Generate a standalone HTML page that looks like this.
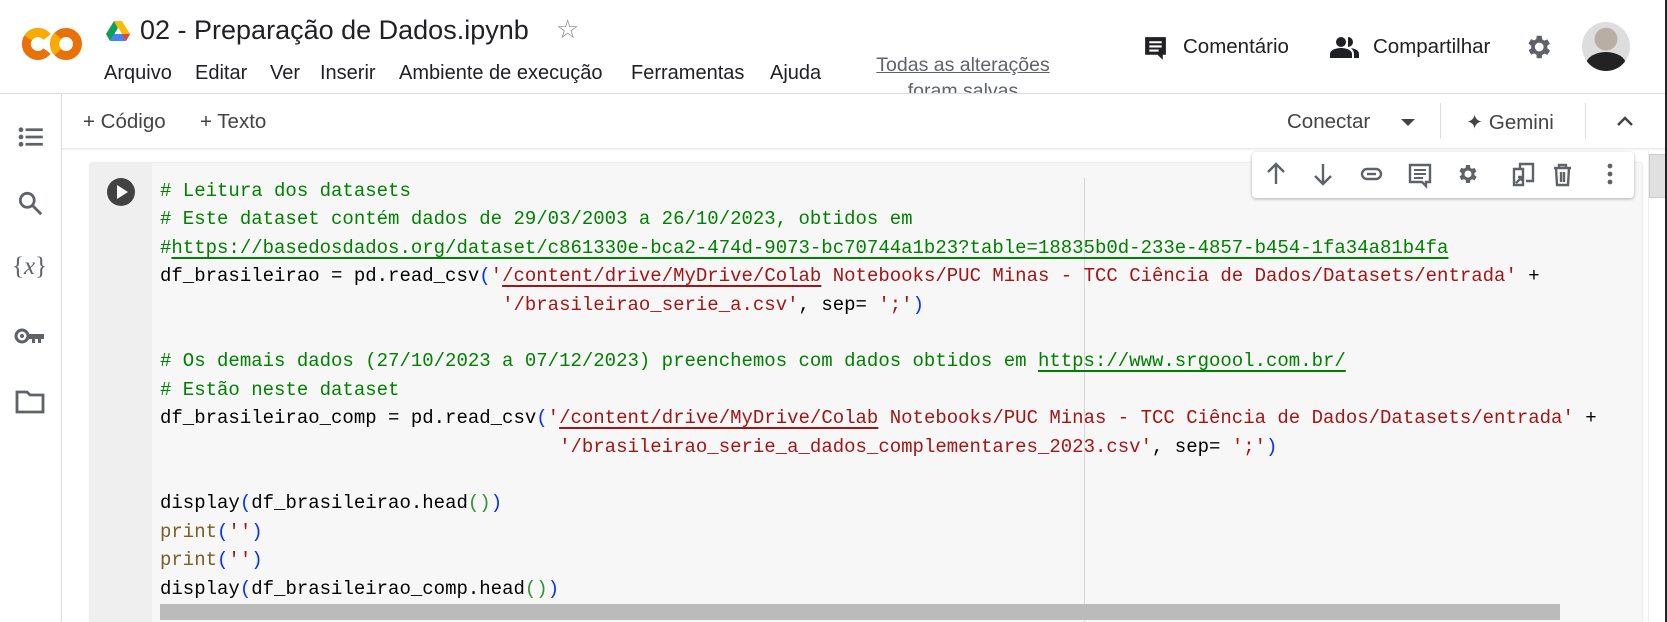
<!DOCTYPE html>
<html><head><meta charset="utf-8"><style>
*{margin:0;padding:0;box-sizing:border-box}
body{width:1667px;height:622px;overflow:hidden;background:#fff;font-family:"Liberation Sans",Arial,sans-serif;position:relative;color:#202124}
.a{position:absolute}
pre{font-family:"Liberation Mono",monospace;font-size:19px;line-height:28.4px;color:#000;white-space:pre}
.c{color:#008000}.s{color:#a31515}.b{color:#0431fa}.g{color:#319331}.p{color:#795e26}
.uc{text-decoration:underline;text-decoration-color:#008000;text-underline-offset:4px;text-decoration-thickness:2px}
.us{text-decoration:underline;text-decoration-color:#a31515;text-underline-offset:4px;text-decoration-thickness:2px}
</style></head><body>
<!-- header -->
<svg class="a" style="left:20px;top:26px" width="62" height="36" viewBox="0 0 62 36">
<path d="M27 11 A11.5 11.5 0 1 0 27 25" fill="none" stroke="#e8710a" stroke-width="9"/>
<path d="M27 11 A11.5 11.5 0 0 0 8 12" fill="none" stroke="#f9ab00" stroke-width="9"/>
<circle cx="46" cy="18" r="11.5" fill="none" stroke="#e8710a" stroke-width="9"/>
<path d="M38 26 A11.5 11.5 0 0 1 38 10" fill="none" stroke="#f9ab00" stroke-width="9"/>
</svg>
<svg class="a" style="left:106px;top:21px" width="24" height="20" viewBox="0 0 24 20">
<path d="M8 0h8l8 13h-8z" fill="#fbbc04"/><path d="M8 0L0 13l4 7 8-13z" fill="#0f9d58"/><path d="M4 20h16l4-7H8z" fill="#4285f4"/><path d="M20 20l4-7h-8z" fill="#ea4335"/>
</svg>
<div class="a" style="left:140px;top:15px;font-size:27px;color:#202124">02 - Preparação de Dados.ipynb</div>
<div class="a" style="left:556px;top:14px;font-size:26px;color:#888">☆</div>
<div class="a" style="left:104px;top:62px;font-size:20px;white-space:nowrap">
<span class="a" style="left:0">Arquivo</span><span class="a" style="left:91px">Editar</span><span class="a" style="left:166px">Ver</span><span class="a" style="left:216px">Inserir</span><span class="a" style="left:295px">Ambiente de execução</span><span class="a" style="left:527px">Ferramentas</span><span class="a" style="left:666px">Ajuda</span></div>
<div class="a" style="left:860px;top:52px;width:206px;height:41px;overflow:hidden;text-align:center;font-size:19.5px;color:#5f6368;line-height:26px"><u>Todas as alterações</u><br>foram salvas</div>
<svg class="a" style="left:1143px;top:35px" width="25" height="27" viewBox="0 0 24 26"><path d="M2 2h20v17h-3v5l-5-5H2z" fill="#202124"/><path d="M6 7h12M6 11h12M6 15h9" stroke="#fff" stroke-width="2"/></svg>
<div class="a" style="left:1183px;top:35px;font-size:20.5px">Comentário</div>
<svg class="a" style="left:1330px;top:36px" width="30" height="22" viewBox="0 0 30 22"><circle cx="11" cy="6" r="5" fill="#202124"/><path d="M0 22v-4c0-4 6-6 11-6s11 2 11 6v4z" fill="#202124"/><path d="M18 1a5 5 0 0 1 0 10" fill="#202124"/><path d="M21 12c4 1 8 2 8 6v4h-5v-4c0-2-1-4-3-6z" fill="#202124"/></svg>
<div class="a" style="left:1373px;top:35px;font-size:20.5px">Compartilhar</div>
<svg class="a" style="left:1523px;top:32px" width="30" height="30" viewBox="0 0 24 24"><path fill="#5f6368" d="M19.4 13a7.5 7.5 0 0 0 0-2l2.1-1.6-2-3.5-2.5 1a7 7 0 0 0-1.7-1L15 3h-4l-.4 2.7a7 7 0 0 0-1.7 1l-2.5-1-2 3.5L6.6 11a7.5 7.5 0 0 0 0 2l-2.1 1.6 2 3.5 2.5-1a7 7 0 0 0 1.7 1L11 21h4l.4-2.7a7 7 0 0 0 1.7-1l2.5 1 2-3.5zM13 15.5A3.5 3.5 0 1 1 13 8.5a3.5 3.5 0 0 1 0 7z"/></svg>
<div class="a" style="left:1582px;top:22px;width:48px;height:49px;border-radius:50%;background:radial-gradient(circle at 50% 35%,#b8aea4 0 28%,#ddd 29% 100%);overflow:hidden"><div style="position:absolute;left:4px;top:30px;width:40px;height:25px;border-radius:50% 50% 0 0;background:#222"></div></div>
<div class="a" style="left:0;top:93px;width:1667px;height:1px;background:#dadce0"></div>
<!-- toolbar -->
<div class="a" style="left:83px;top:110px;font-size:20.5px;color:#444">+ Código</div>
<div class="a" style="left:200px;top:110px;font-size:20.5px;color:#444">+ Texto</div>
<div class="a" style="left:1287px;top:110px;font-size:20.5px;color:#444">Conectar</div>
<div class="a" style="left:1401px;top:119px;width:0;height:0;border-left:7px solid transparent;border-right:7px solid transparent;border-top:7px solid #444"></div>
<div class="a" style="left:1440px;top:103px;width:1px;height:36px;background:#ddd"></div>
<div class="a" style="left:1466px;top:110px;font-size:20.5px;color:#444">✦ Gemini</div>
<div class="a" style="left:1585px;top:103px;width:1px;height:36px;background:#ddd"></div>
<svg class="a" style="left:1615px;top:114px" width="20" height="14" viewBox="0 0 20 14"><path d="M3 11l7-7 7 7" fill="none" stroke="#444" stroke-width="2.5"/></svg>
<div class="a" style="left:61px;top:148px;width:1606px;height:3px;background:linear-gradient(#e8e8e8,#fff)"></div>
<!-- sidebar -->
<div class="a" style="left:61px;top:93px;width:1px;height:529px;background:#dadce0"></div>
<svg class="a" style="left:18px;top:127px" width="26" height="20" viewBox="0 0 28 22"><g fill="#5f6368"><circle cx="3" cy="3" r="2.6"/><circle cx="3" cy="11" r="2.6"/><circle cx="3" cy="19" r="2.6"/><rect x="8" y="1.5" width="19" height="3"/><rect x="8" y="9.5" width="19" height="3"/><rect x="8" y="17.5" width="19" height="3"/></g></svg>
<svg class="a" style="left:18px;top:191px" width="26" height="26" viewBox="0 0 28 28"><circle cx="10" cy="10" r="7.5" fill="none" stroke="#5f6368" stroke-width="3"/><path d="M15.5 15.5L25 25" stroke="#5f6368" stroke-width="3"/></svg>
<div class="a" style="left:12px;top:253px;font-family:'Liberation Serif',serif;font-size:25px;color:#5f6368">{<i>x</i>}</div>
<svg class="a" style="left:14px;top:328px" width="32" height="18" viewBox="0 0 32 18"><circle cx="8" cy="8" r="6" fill="none" stroke="#5f6368" stroke-width="3"/><circle cx="8" cy="8" r="2" fill="#5f6368"/><path d="M14 6h16v5h-3v4h-3v-4h-3v4h-3v-4h-4z" fill="#5f6368"/></svg>
<svg class="a" style="left:15px;top:390px" width="30" height="24" viewBox="0 0 30 24"><path d="M2 2h10l3 3h13v17H2z" fill="none" stroke="#5f6368" stroke-width="2.8"/></svg>
<!-- cell -->
<div class="a" style="left:90px;top:163px;width:1552px;height:459px;background:#f7f7f7;box-shadow:0 0 2px #ccc"></div>
<div class="a" style="left:90px;top:163px;width:62px;height:459px;background:#efefef"></div>
<div class="a" style="left:107px;top:178px;width:28px;height:28px;border-radius:50%;background:#424242"></div>
<div class="a" style="left:117px;top:185px;width:0;height:0;border-top:7px solid transparent;border-bottom:7px solid transparent;border-left:11px solid #fff"></div>
<div class="a" style="left:1084px;top:178px;width:1px;height:444px;background:#d6d6d6"></div>
<pre class="a" style="left:160px;top:177px"><span class="c"># Leitura dos datasets</span>
<span class="c"># Este dataset contém dados de 29/03/2003 a 26/10/2023, obtidos em</span>
<span class="c">#<span class="uc">https://basedosdados.org/dataset/c861330e-bca2-474d-9073-bc70744a1b23?table=18835b0d-233e-4857-b454-1fa34a81b4fa</span></span>
df_brasileirao = pd.read_csv<span class="b">(</span><span class="s">'<span class="us">/content/drive/MyDrive/Colab</span> Notebooks/PUC Minas - TCC Ciência de Dados/Datasets/entrada'</span> +
                              <span class="s">'/brasileirao_serie_a.csv'</span>, sep= <span class="s">';'</span><span class="b">)</span>

<span class="c"># Os demais dados (27/10/2023 a 07/12/2023) preenchemos com dados obtidos em <span class="uc">https://www.srgoool.com.br/</span></span>
<span class="c"># Estão neste dataset</span>
df_brasileirao_comp = pd.read_csv<span class="b">(</span><span class="s">'<span class="us">/content/drive/MyDrive/Colab</span> Notebooks/PUC Minas - TCC Ciência de Dados/Datasets/entrada'</span> +
                                   <span class="s">'/brasileirao_serie_a_dados_complementares_2023.csv'</span>, sep= <span class="s">';'</span><span class="b">)</span>

display<span class="b">(</span>df_brasileirao.head<span class="g">()</span><span class="b">)</span>
<span class="p">print</span><span class="b">(</span><span class="s">''</span><span class="b">)</span>
<span class="p">print</span><span class="b">(</span><span class="s">''</span><span class="b">)</span>
display<span class="b">(</span>df_brasileirao_comp.head<span class="g">()</span><span class="b">)</span></pre>
<div class="a" style="left:160px;top:604px;width:1400px;height:16px;background:#bbb"></div>
<!-- cell toolbar -->
<div class="a" style="left:1252px;top:152px;width:382px;height:46px;background:#fff;border-radius:4px;box-shadow:0 1px 3px rgba(0,0,0,.3)"></div>
<svg class="a" style="left:1252px;top:152px" width="382" height="46" viewBox="0 0 382 46">
<g stroke="#5f6368" stroke-width="2.4" fill="none">
<path d="M24 32V12M16 20l8-8 8 8"/>
<path d="M71 12v20M63 24l8 8 8-8"/>
<rect x="110" y="17" width="19" height="10" rx="5"/><path d="M115 22h9"/>
<path d="M158 13h20v17h-4v4l-4-4h-12z"/><path d="M162 18h12M162 22h12M162 26h9" stroke-width="2"/>
<path d="M268 17v-5h13v17h-7M262 17h9v16h-9zM264 31l6-6M266 25h4v4"/>
<path d="M302 16h17M307 16v-3h7v3M304 16l1 17h11l1-17M309 20v10M312 20v10"/>
</g>
<path transform="translate(203 10)" fill="#5f6368" d="M19.4 13a7.5 7.5 0 0 0 0-2l2.1-1.6-2-3.5-2.5 1a7 7 0 0 0-1.7-1L15 3h-4l-.4 2.7a7 7 0 0 0-1.7 1l-2.5-1-2 3.5L6.6 11a7.5 7.5 0 0 0 0 2l-2.1 1.6 2 3.5 2.5-1a7 7 0 0 0 1.7 1L11 21h4l.4-2.7a7 7 0 0 0 1.7-1l2.5 1 2-3.5zM13 15.5A3.5 3.5 0 1 1 13 8.5a3.5 3.5 0 0 1 0 7z"/>
<g fill="#5f6368"><circle cx="358" cy="14" r="2.4"/><circle cx="358" cy="22" r="2.4"/><circle cx="358" cy="30" r="2.4"/></g>
</svg>
<!-- page scrollbar -->
<div class="a" style="left:1648px;top:151px;width:19px;height:471px;background:#fff;border-left:1px solid #eee"></div>
<div class="a" style="left:1649px;top:154px;width:17px;height:44px;background:#e0e0e0;border:1px solid #ccc"></div>
<div class="a" style="left:1665px;top:0;width:2px;height:622px;background:#222"></div>
</body></html>
